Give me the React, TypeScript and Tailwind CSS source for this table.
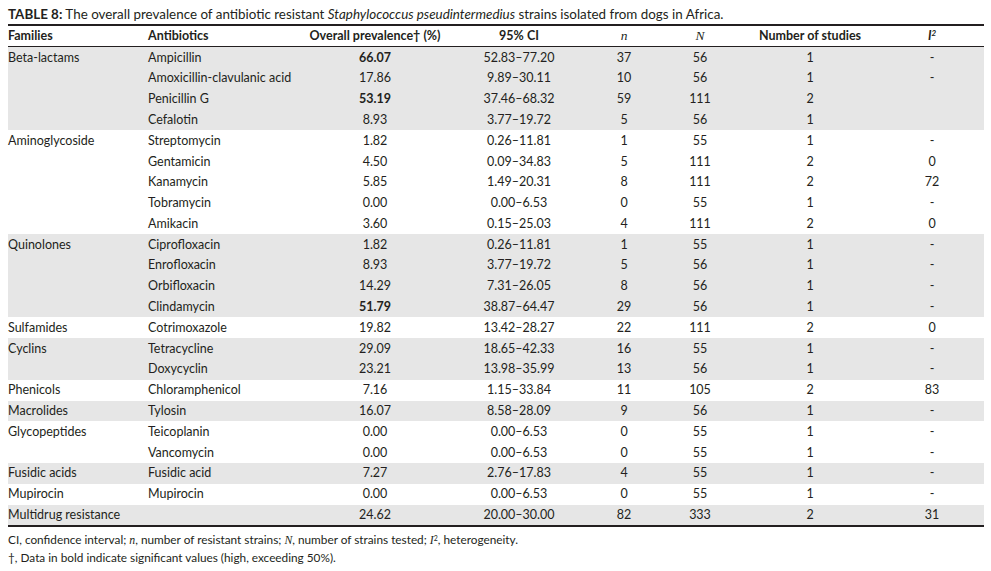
import React from "react";

type Row = {
  drug: string;
  prev: string;
  bold?: boolean;
  ci: string;
  n: string;
  N: string;
  studies: string;
  i2: string;
};

type Group = { family: string; rows: Row[] };

const groups: Group[] = [
  {
    family: "Beta-lactams",
    rows: [
      { drug: "Ampicillin", prev: "66.07", bold: true, ci: "52.83–77.20", n: "37", N: "56", studies: "1", i2: "-" },
      { drug: "Amoxicillin-clavulanic acid", prev: "17.86", ci: "9.89–30.11", n: "10", N: "56", studies: "1", i2: "-" },
      { drug: "Penicillin G", prev: "53.19", bold: true, ci: "37.46–68.32", n: "59", N: "111", studies: "2", i2: "" },
      { drug: "Cefalotin", prev: "8.93", ci: "3.77–19.72", n: "5", N: "56", studies: "1", i2: "" },
    ],
  },
  {
    family: "Aminoglycoside",
    rows: [
      { drug: "Streptomycin", prev: "1.82", ci: "0.26–11.81", n: "1", N: "55", studies: "1", i2: "-" },
      { drug: "Gentamicin", prev: "4.50", ci: "0.09–34.83", n: "5", N: "111", studies: "2", i2: "0" },
      { drug: "Kanamycin", prev: "5.85", ci: "1.49–20.31", n: "8", N: "111", studies: "2", i2: "72" },
      { drug: "Tobramycin", prev: "0.00", ci: "0.00–6.53", n: "0", N: "55", studies: "1", i2: "-" },
      { drug: "Amikacin", prev: "3.60", ci: "0.15–25.03", n: "4", N: "111", studies: "2", i2: "0" },
    ],
  },
  {
    family: "Quinolones",
    rows: [
      { drug: "Ciprofloxacin", prev: "1.82", ci: "0.26–11.81", n: "1", N: "55", studies: "1", i2: "-" },
      { drug: "Enrofloxacin", prev: "8.93", ci: "3.77–19.72", n: "5", N: "56", studies: "1", i2: "-" },
      { drug: "Orbifloxacin", prev: "14.29", ci: "7.31–26.05", n: "8", N: "56", studies: "1", i2: "-" },
      { drug: "Clindamycin", prev: "51.79", bold: true, ci: "38.87–64.47", n: "29", N: "56", studies: "1", i2: "-" },
    ],
  },
  {
    family: "Sulfamides",
    rows: [{ drug: "Cotrimoxazole", prev: "19.82", ci: "13.42–28.27", n: "22", N: "111", studies: "2", i2: "0" }],
  },
  {
    family: "Cyclins",
    rows: [
      { drug: "Tetracycline", prev: "29.09", ci: "18.65–42.33", n: "16", N: "55", studies: "1", i2: "-" },
      { drug: "Doxycyclin", prev: "23.21", ci: "13.98–35.99", n: "13", N: "56", studies: "1", i2: "-" },
    ],
  },
  {
    family: "Phenicols",
    rows: [{ drug: "Chloramphenicol", prev: "7.16", ci: "1.15–33.84", n: "11", N: "105", studies: "2", i2: "83" }],
  },
  {
    family: "Macrolides",
    rows: [{ drug: "Tylosin", prev: "16.07", ci: "8.58–28.09", n: "9", N: "56", studies: "1", i2: "-" }],
  },
  {
    family: "Glycopeptides",
    rows: [
      { drug: "Teicoplanin", prev: "0.00", ci: "0.00–6.53", n: "0", N: "55", studies: "1", i2: "-" },
      { drug: "Vancomycin", prev: "0.00", ci: "0.00–6.53", n: "0", N: "55", studies: "1", i2: "-" },
    ],
  },
  {
    family: "Fusidic acids",
    rows: [{ drug: "Fusidic acid", prev: "7.27", ci: "2.76–17.83", n: "4", N: "55", studies: "1", i2: "-" }],
  },
  {
    family: "Mupirocin",
    rows: [{ drug: "Mupirocin", prev: "0.00", ci: "0.00–6.53", n: "0", N: "55", studies: "1", i2: "-" }],
  },
  {
    family: "Multidrug resistance",
    rows: [{ drug: "", prev: "24.62", ci: "20.00–30.00", n: "82", N: "333", studies: "2", i2: "31" }],
  },
];

const cols = "grid grid-cols-[140px_152px_150px_138px_72px_80px_140px_104px] items-center";
const serif = "font-['Liberation_Serif',serif] italic";

export default function App() {
  return (
    <div className="w-[991px] h-[571px] bg-white text-[#231f20] font-['Lato',sans-serif] text-[12.5px] px-2 pt-[5px]">
      <p className="text-[13.4px] leading-[18px] whitespace-nowrap">
        <span className="font-bold">TABLE 8:</span> The overall prevalence of antibiotic resistant{" "}
        <i>Staphylococcus pseudintermedius</i> strains isolated from dogs in Africa.
      </p>

      <div className="w-[976px] border-t-2 border-[#231f20] mt-[1px]">
        <div className={`${cols} h-[21px] font-bold border-b border-[#231f20]`}>
          <div>Families</div>
          <div>Antibiotics</div>
          <div className="text-center">Overall prevalence† (%)</div>
          <div className="text-center">95% CI</div>
          <div className={`text-center font-normal text-[13.5px] ${serif}`}>n</div>
          <div className={`text-center font-normal text-[13.5px] ${serif}`}>N</div>
          <div className="text-center">Number of studies</div>
          <div className="text-center italic">
            I<sup className="text-[8px]">2</sup>
          </div>
        </div>

        {groups.map((g, gi) => (
          <div key={g.family} className={gi % 2 === 0 ? "bg-[#e6e6e6]" : "bg-white"}>
            {g.rows.map((r, ri) => (
              <div key={g.family + ri} className={`${cols} h-[20.8px] pt-[1px]`}>
                <div className="whitespace-nowrap">{ri === 0 ? g.family : ""}</div>
                <div className="whitespace-nowrap">{r.drug}</div>
                <div className={`text-center ${r.bold ? "font-bold" : ""}`}>{r.prev}</div>
                <div className="text-center">{r.ci}</div>
                <div className="text-center">{r.n}</div>
                <div className="text-center">{r.N}</div>
                <div className="text-center">{r.studies}</div>
                <div className="text-center">{r.i2}</div>
              </div>
            ))}
          </div>
        ))}

        <div className="border-t-2 border-[#231f20]" />
      </div>

      <div className="text-[11.8px] leading-[18px] mt-[4px]">
        <p>
          CI, confidence interval; <span className={serif}>n</span>, number of resistant strains;{" "}
          <span className={serif}>N</span>, number of strains tested; <span className={serif}>I</span>
          <sup className="text-[7px]">2</sup>, heterogeneity.
        </p>
        <p>†, Data in bold indicate significant values (high, exceeding 50%).</p>
      </div>
    </div>
  );
}
